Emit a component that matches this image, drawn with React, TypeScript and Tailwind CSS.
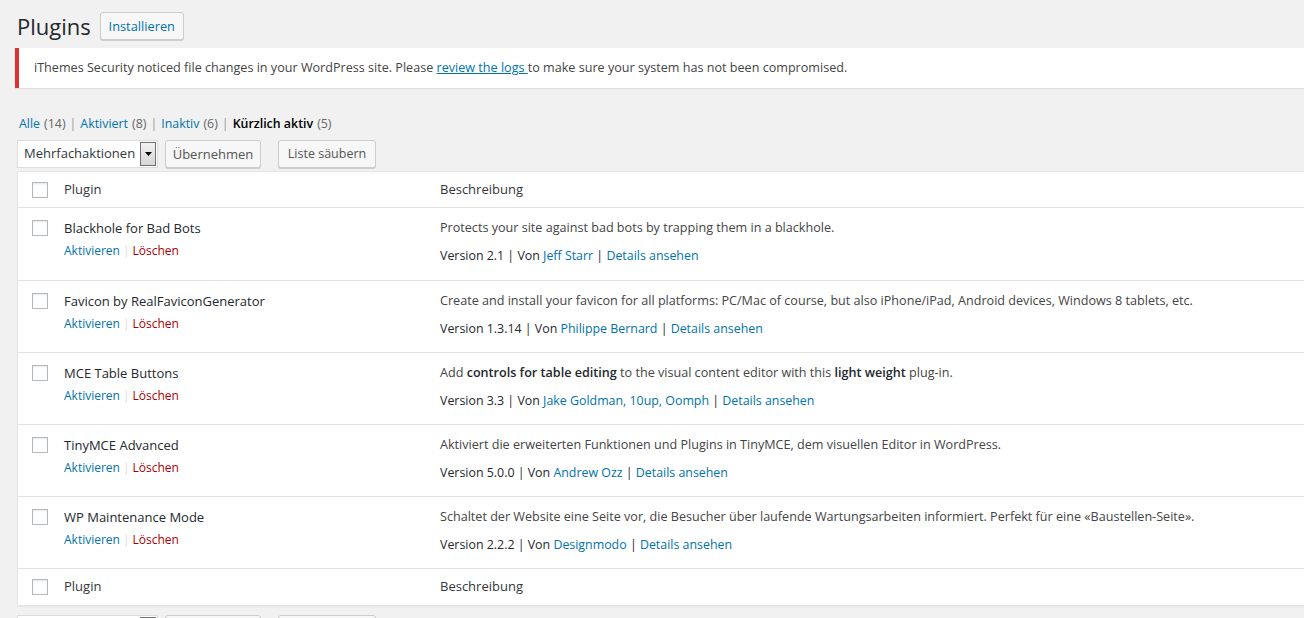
import React from 'react';

const font = { fontFamily: '"Open Sans", "Noto Sans", sans-serif' };

type Plugin = {
  name: string;
  description: React.ReactNode;
  version: string;
  authors: string;
};

const plugins: Plugin[] = [
  {
    name: 'Blackhole for Bad Bots',
    description: 'Protects your site against bad bots by trapping them in a blackhole.',
    version: '2.1',
    authors: 'Jeff Starr',
  },
  {
    name: 'Favicon by RealFaviconGenerator',
    description:
      'Create and install your favicon for all platforms: PC/Mac of course, but also iPhone/iPad, Android devices, Windows 8 tablets, etc.',
    version: '1.3.14',
    authors: 'Philippe Bernard',
  },
  {
    name: 'MCE Table Buttons',
    description: (
      <>
        Add <strong className="font-semibold text-[#23282d]">controls for table editing</strong> to the visual content
        editor with this <strong className="font-semibold text-[#23282d]">light weight</strong> plug-in.
      </>
    ),
    version: '3.3',
    authors: 'Jake Goldman, 10up, Oomph',
  },
  {
    name: 'TinyMCE Advanced',
    description: 'Aktiviert die erweiterten Funktionen und Plugins in TinyMCE, dem visuellen Editor in WordPress.',
    version: '5.0.0',
    authors: 'Andrew Ozz',
  },
  {
    name: 'WP Maintenance Mode',
    description:
      'Schaltet der Website eine Seite vor, die Besucher über laufende Wartungsarbeiten informiert. Perfekt für eine «Baustellen-Seite».',
    version: '2.2.2',
    authors: 'Designmodo',
  },
];

const Checkbox = () => (
  <span className="block w-4 h-4 border border-[#b4b9be] bg-white shadow-[inset_0_1px_2px_rgba(0,0,0,0.1)]" />
);

const Button = ({
  children,
  className = '',
  primaryText = false,
}: {
  children: React.ReactNode;
  className?: string;
  primaryText?: boolean;
}) => (
  <button
    className={`h-[28px] whitespace-nowrap leading-[26px] bg-[#f7f7f7] border border-[#ccc] rounded-[3px] shadow-[0_1px_0_#ccc] ${
      primaryText ? 'text-[#0073aa]' : 'text-[#555]'
    } ${className}`}
  >
    {children}
  </button>
);

const BulkActions = () => (
  <div className="flex items-center h-[28px]">
    <div className="flex items-center h-[28px] w-[141px] bg-white border border-[#ddd] pl-[6px] pr-[1px]">
      <span className="flex-1 whitespace-nowrap text-[13px] text-[#32373c]">Mehrfachaktionen</span>
      <span className="flex items-center justify-center w-[16px] h-[24px] border border-[#707070] bg-gradient-to-b from-[#f2f2f2] to-[#d6d6d6]">
        <svg width="7" height="4" viewBox="0 0 7 4">
          <path d="M0 0h7L3.5 4z" fill="#000" />
        </svg>
      </span>
    </div>
    <Button className="ml-[7px] w-[96px] text-[13px]">Übernehmen</Button>
    <Button className="ml-[17px] w-[98px] text-[12.5px]">Liste säubern</Button>
  </div>
);

const HeaderRow = ({ top }: { top?: boolean }) => (
  <div className={`flex items-center ${top ? 'h-[36px] border-b' : 'h-[37px] border-t'} border-[#e1e1e1]`}>
    <div className="w-[46px] pl-[14px]">
      <Checkbox />
    </div>
    <div className="w-[376px] text-[13px] text-[#32373c]">Plugin</div>
    <div className="text-[13px] text-[#32373c]">Beschreibung</div>
  </div>
);

const Sep = () => <span className="mx-[4px] text-[#999]">|</span>;

export default function App() {
  return (
    <div className="min-h-[618px] bg-[#f1f1f1] pl-[17px] pt-[10px] overflow-hidden text-[13px] text-[#444]" style={font}>
      <div className="flex items-center h-[32px]">
        <h1 className="text-[22px] font-normal text-[#23282d] leading-[29px]">Plugins</h1>
        <Button primaryText className="ml-[9px] h-[27px] leading-[25px] w-[84px] font-medium text-[12.8px]">
          Installieren
        </Button>
      </div>

      <div className="mt-[6px] -ml-[2px] h-[40px] flex items-center bg-white border-l-4 border-[#dc3232] shadow-[0_1px_1px_rgba(0,0,0,0.08)] pl-[15px]">
        <p className="text-[12.6px] text-[#444]">
          iThemes Security noticed file changes in your WordPress site. Please{' '}
          <a className="text-[#0073aa] underline">review the logs </a>to make sure your system has not been compromised.
        </p>
      </div>

      <div className="mt-[27px] ml-[2px] flex items-center h-[18px] text-[12.4px] text-[#666]">
        <a className="text-[#0073aa]">Alle</a>
        <span className="ml-[4px]">(14)</span>
        <Sep />
        <a className="text-[#0073aa]">Aktiviert</a>
        <span className="ml-[4px]">(8)</span>
        <Sep />
        <a className="text-[#0073aa]">Inaktiv</a>
        <span className="ml-[4px]">(6)</span>
        <Sep />
        <span className="font-semibold text-[#000]">Kürzlich aktiv</span>
        <span className="ml-[4px]">(5)</span>
      </div>

      <div className="mt-[7px]">
        <BulkActions />
      </div>

      <div className="mt-[3px] bg-white border border-r-0 border-[#e5e5e5] shadow-[0_1px_1px_rgba(0,0,0,0.04)]">
        <HeaderRow top />
        {plugins.map((p, i) => (
          <div key={p.name} className={`flex h-[72px] pt-[11px] ${i > 0 ? 'border-t border-[#e1e1e1]' : ''}`}>
            <div className="w-[46px] pl-[14px] pt-[1px]">
              <Checkbox />
            </div>
            <div className="w-[376px]">
              <div className="text-[13px] leading-[18px] text-[#23282d]">{p.name}</div>
              <div className="mt-[5px] text-[12px] leading-[18px]">
                <a className="text-[#0073aa]">Aktivieren</a>
                <span className="mx-[3px] text-[#ddd]">|</span>
                <a className="text-[#a00]">Löschen</a>
              </div>
            </div>
            <div className="flex-1">
              <p className="text-[12.6px] leading-[18px] text-[#444]">{p.description}</p>
              <div className="mt-[10px] text-[12.4px] leading-[18px] text-[#23282d]">
                Version {p.version} | Von <a className="text-[#0073aa]">{p.authors}</a> |{' '}
                <a className="text-[#0073aa]">Details ansehen</a>
              </div>
            </div>
          </div>
        ))}
        <HeaderRow />
      </div>

      <div className="mt-[9px]">
        <BulkActions />
      </div>
    </div>
  );
}
